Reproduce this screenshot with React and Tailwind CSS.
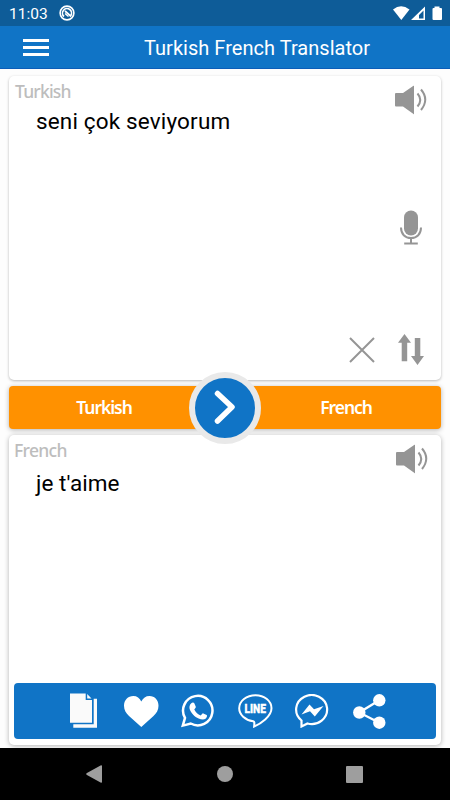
import React from 'react';

function SpeakerIcon() {
  return (
    <svg width="33" height="30" viewBox="0 0 33 30" fill="none">
      <path d="M1 8h7L18.5 0.8Q19 0.5 19 1V29Q19 29.5 18.5 29L8 21.5H1Q0 21.5 0 20.5V9Q0 8 1 8Z" fill="#959595" />
      <path d="M22.5 8.5Q28 14.8 22.5 21.5M26 4.5Q34.5 14.5 26 25" stroke="#959595" strokeWidth="2" />
    </svg>
  );
}

function MicIcon() {
  return (
    <svg width="22" height="35" viewBox="0 0 22 35" fill="none">
      <rect x="4" y="0.5" width="14" height="25" rx="7" fill="#959595" />
      <path d="M1 17.5c0 6.500 4 10.500 10 10.500s10-4 10-10.500M11 28v5.500M4.200 33.500H17.800" stroke="#959595" strokeWidth="2" />
    </svg>
  );
}

function SwapIcon() {
  return (
    <svg width="26" height="31" viewBox="0 0 26 31" fill="#959595">
      <path d="M6.500 0L13 8.800H9.200V27.300H3.700V8.800H0Z" />
      <path d="M16.800 4H22.300V22H26L19.500 31L13 22H16.800Z" />
    </svg>
  );
}

function CopyIcon() {
  return (
    <svg width="28" height="36" viewBox="0 0 28 36" fill="#fafafa">
      <path d="M1 0.500H15.700V7H22V29.700H0V0.500Z" />
      <path d="M17.200 1L21.500 5.500H17.200Z" />
      <path d="M23.700 5.800H27V34.700H3.300V31.300H23.700Z" />
    </svg>
  );
}

function HeartIcon() {
  return (
    <svg width="35" height="31" viewBox="0 0 35 31" fill="#fff">
      <path d="M17.300 31L5 20C2 17 0 14.200 0 9.800C0 4 4 0 9.300 0C13 0 15.700 2 17.300 5.500C19 2 21.800 0 25.500 0C30.700 0 34.500 4 34.500 9.800C34.500 14.200 32.500 17 29.500 20Z" />
    </svg>
  );
}

function WhatsappIcon() {
  return (
    <svg width="34" height="34" viewBox="0 0 34 34" fill="none">
      <path d="M1.800 31.600L4 23.900A14.700 14.700 0 1 1 9.700 29.500Z" stroke="#fff" strokeWidth="2.500" />
      <path d="M10.300 9.200C11 8.300 12.900 8.200 13.300 9.200L14.800 12.800C15.200 13.900 13.400 15 13.300 15.600C14.700 18.600 17 20.500 19.600 21.500C20.500 21.400 21.300 19.100 22.300 19.400L25.700 21.100C26.500 21.600 25.800 23.700 24.900 24.500C22.800 26.100 20.200 25.600 17.600 24.500C13.600 22.900 10.200 18.800 8.900 15.700C7.900 13.200 8.500 10.700 10.300 9.200Z" fill="#fff" />
    </svg>
  );
}

function LineIcon() {
  return (
    <svg width="35" height="34" viewBox="0 0 35 34" fill="none">
      <path d="M17.500 1.200C8.500 1.200 1.200 7.200 1.200 14.300C1.200 20.700 7 26.200 15.200 27.300C16.700 27.600 16.500 29 16.100 32.500C22.500 30 33.500 22.500 33.500 14.300C33.500 7.200 26.400 1.200 17.500 1.200Z" stroke="#fff" strokeWidth="2" />
      <text x="6.500" y="19.300" fontFamily="Roboto, sans-serif" fontSize="12.500" fontWeight="900" textLength="21.500" lengthAdjust="spacingAndGlyphs" fill="#fff" stroke="#fff" strokeWidth="0.300">LINE</text>
    </svg>
  );
}

function MessengerIcon() {
  return (
    <svg width="34" height="34" viewBox="0 0 34 34" fill="none">
      <path d="M6.500 32.500V26.500A15.500 14.500 0 1 1 12.500 29.500Z" stroke="#fff" strokeWidth="2.200" />
      <path d="M6.500 20.500L14.500 10.500L19 15.200L28.500 12L19.800 22.500L15 17.300Z" fill="#fff" />
    </svg>
  );
}

function ShareIcon() {
  return (
    <svg width="33" height="35" viewBox="0 0 33 35" fill="#fff">
      <path d="M26.300 6.300L6.300 18.500L26.300 28.700" fill="none" stroke="#fff" strokeWidth="2.300" />
      <circle cx="26.300" cy="6.300" r="6.200" />
      <circle cx="6.300" cy="18.500" r="6.200" />
      <circle cx="26.300" cy="28.700" r="6.200" />
    </svg>
  );
}

function StatusBar() {
  return (
    <div className="flex h-[26px] items-center bg-[#0e5c98] pl-[9px] pr-2 text-white">
      <span className="pt-[2px] text-[15.5px] leading-[24px]">11:03</span>
      <svg className="ml-[11px]" width="16" height="16" viewBox="0 0 16 16" fill="none" stroke="#fff">
        <circle cx="8" cy="8" r="6.900" strokeWidth="1.600" />
        <path d="M5 11.500A4.500 4.500 0 1 1 11.500 11L6 6" strokeWidth="1.700" />
        <path d="M6 8.500L9.500 11.500" strokeWidth="1.400" />
      </svg>
      <svg className="ml-auto" width="49" height="15" viewBox="0 0 49 15" fill="#fff">
        <path d="M0 3.500Q8 -3 16.500 3.500L8.300 14Z" />
        <path fillRule="evenodd" d="M18 14L32 0.500V14ZM26 12.500H30.500V4.500L26 9Z" />
        <path d="M41.500 0.500H46.500V2H48Q49 2 49 3V13Q49 14 48 14H40.500Q39.500 14 39.500 13V3Q39.500 2 40.500 2H41.500Z" />
      </svg>
    </div>
  );
}

const actions = [CopyIcon, HeartIcon, WhatsappIcon, LineIcon, MessengerIcon, ShareIcon];

export default function App() {
  return (
    <div className="flex h-[800px] w-[450px] flex-col overflow-hidden bg-[#fdfdfd] font-[Roboto,sans-serif]">
      <StatusBar />
      <header className="flex h-[43px] items-center border-b border-[#0c5db8] bg-[#1074c6] pl-[23px] text-white">
        <div className="flex w-[26px] flex-col gap-1 pt-px">
          <span className="h-[3px] bg-white" />
          <span className="h-[3px] bg-white" />
          <span className="h-[3px] bg-white" />
        </div>
        <h1 className="ml-[95px] whitespace-nowrap pt-[2px] text-[20px] leading-6 tracking-[0.03px]">Turkish French Translator</h1>
      </header>

      <main className="flex h-[679px] flex-col px-[9px] pt-[7px]">
        <section className="flex h-[304px] justify-between rounded-[5px] bg-white pl-1.5 pr-3.5 shadow-[0_1px_3px_rgba(0,0,0,0.28)]">
          <div className="pt-[3px]">
            <div className="font-['Noto_Sans',sans-serif] text-[17.5px] font-medium leading-6 tracking-[-0.8px] text-[#bdbdbd]">Turkish</div>
            <p className="ml-[21px] mt-[3px] text-[22.5px] leading-[30px] tracking-[0.16px] text-black">seni çok seviyorum</p>
          </div>
          <div className="flex flex-col items-end pt-[9px]">
            <div className="-mr-px">
              <SpeakerIcon />
            </div>
            <div className="mr-[5px] mt-[95px]">
              <MicIcon />
            </div>
            <div className="mr-[3px] mt-[89px] flex items-center gap-[23px]">
              <svg width="26" height="26" viewBox="0 0 26 26" fill="none">
                <path d="M1 1L25 25M25 1L1 25" stroke="#959595" strokeWidth="2" />
              </svg>
              <SwapIcon />
            </div>
          </div>
        </section>

        <section className="relative mt-1.5 flex h-[43px] items-center rounded-[4px] bg-[#ff9100] font-['Noto_Sans',sans-serif] text-[17.5px] font-semibold tracking-[-1.05px] text-white shadow-[0_1px_5px_rgba(0,0,0,0.3)]">
          <span className="w-[190px] text-center">Turkish</span>
          <span className="ml-[52px] w-[190px] text-center">French</span>
          <button className="absolute left-[180px] top-[-14px] flex h-[72px] w-[72px] items-center justify-center rounded-full border-[6px] border-[#e9e9e9] bg-[#1074c6]">
            <svg width="22" height="36" viewBox="0 0 22 36" fill="none">
              <path d="M3.500 3.500L18 17L3.500 31" stroke="#fff" strokeWidth="5.500" strokeLinecap="round" strokeLinejoin="round" />
            </svg>
          </button>
        </section>

        <section className="mt-1.5 flex h-[310px] flex-col rounded-[5px] bg-white px-[5px] pb-1.5 shadow-[0_1px_5px_rgba(0,0,0,0.3)]">
          <div className="flex justify-between pr-[7px]">
            <div className="pt-[3px]">
              <div className="font-['Noto_Sans',sans-serif] text-[17.5px] font-medium leading-6 tracking-[-0.7px] text-[#bdbdbd]">French</div>
              <p className="ml-[22px] mt-[6px] text-[22.5px] leading-[30px] tracking-[0.05px] text-black">je t'aime</p>
            </div>
            <div className="pt-[9px]">
              <SpeakerIcon />
            </div>
          </div>
          <div className="mt-auto flex h-14 items-center rounded-[4px] bg-[#1074c6] pl-[41.5px]">
            {actions.map((Icon, i) => (
              <button key={i} className="flex w-[57px] items-center justify-center">
                <Icon />
              </button>
            ))}
          </div>
        </section>
      </main>

      <nav className="flex h-[52px] items-center bg-black">
        <svg className="ml-[86px]" width="16" height="18" viewBox="0 0 16 18" fill="#9e9e9e">
          <path d="M0.500 8.300L14.500 0.500Q16 0 16 1V17Q16 18 14.500 17.500L0.500 9.700Q0 9 0.500 8.300Z" />
        </svg>
        <span className="ml-[115px] h-4 w-4 rounded-full bg-[#9e9e9e]" />
        <span className="ml-[113px] h-[17px] w-[17px] rounded-[1px] bg-[#9e9e9e]" />
      </nav>
    </div>
  );
}
